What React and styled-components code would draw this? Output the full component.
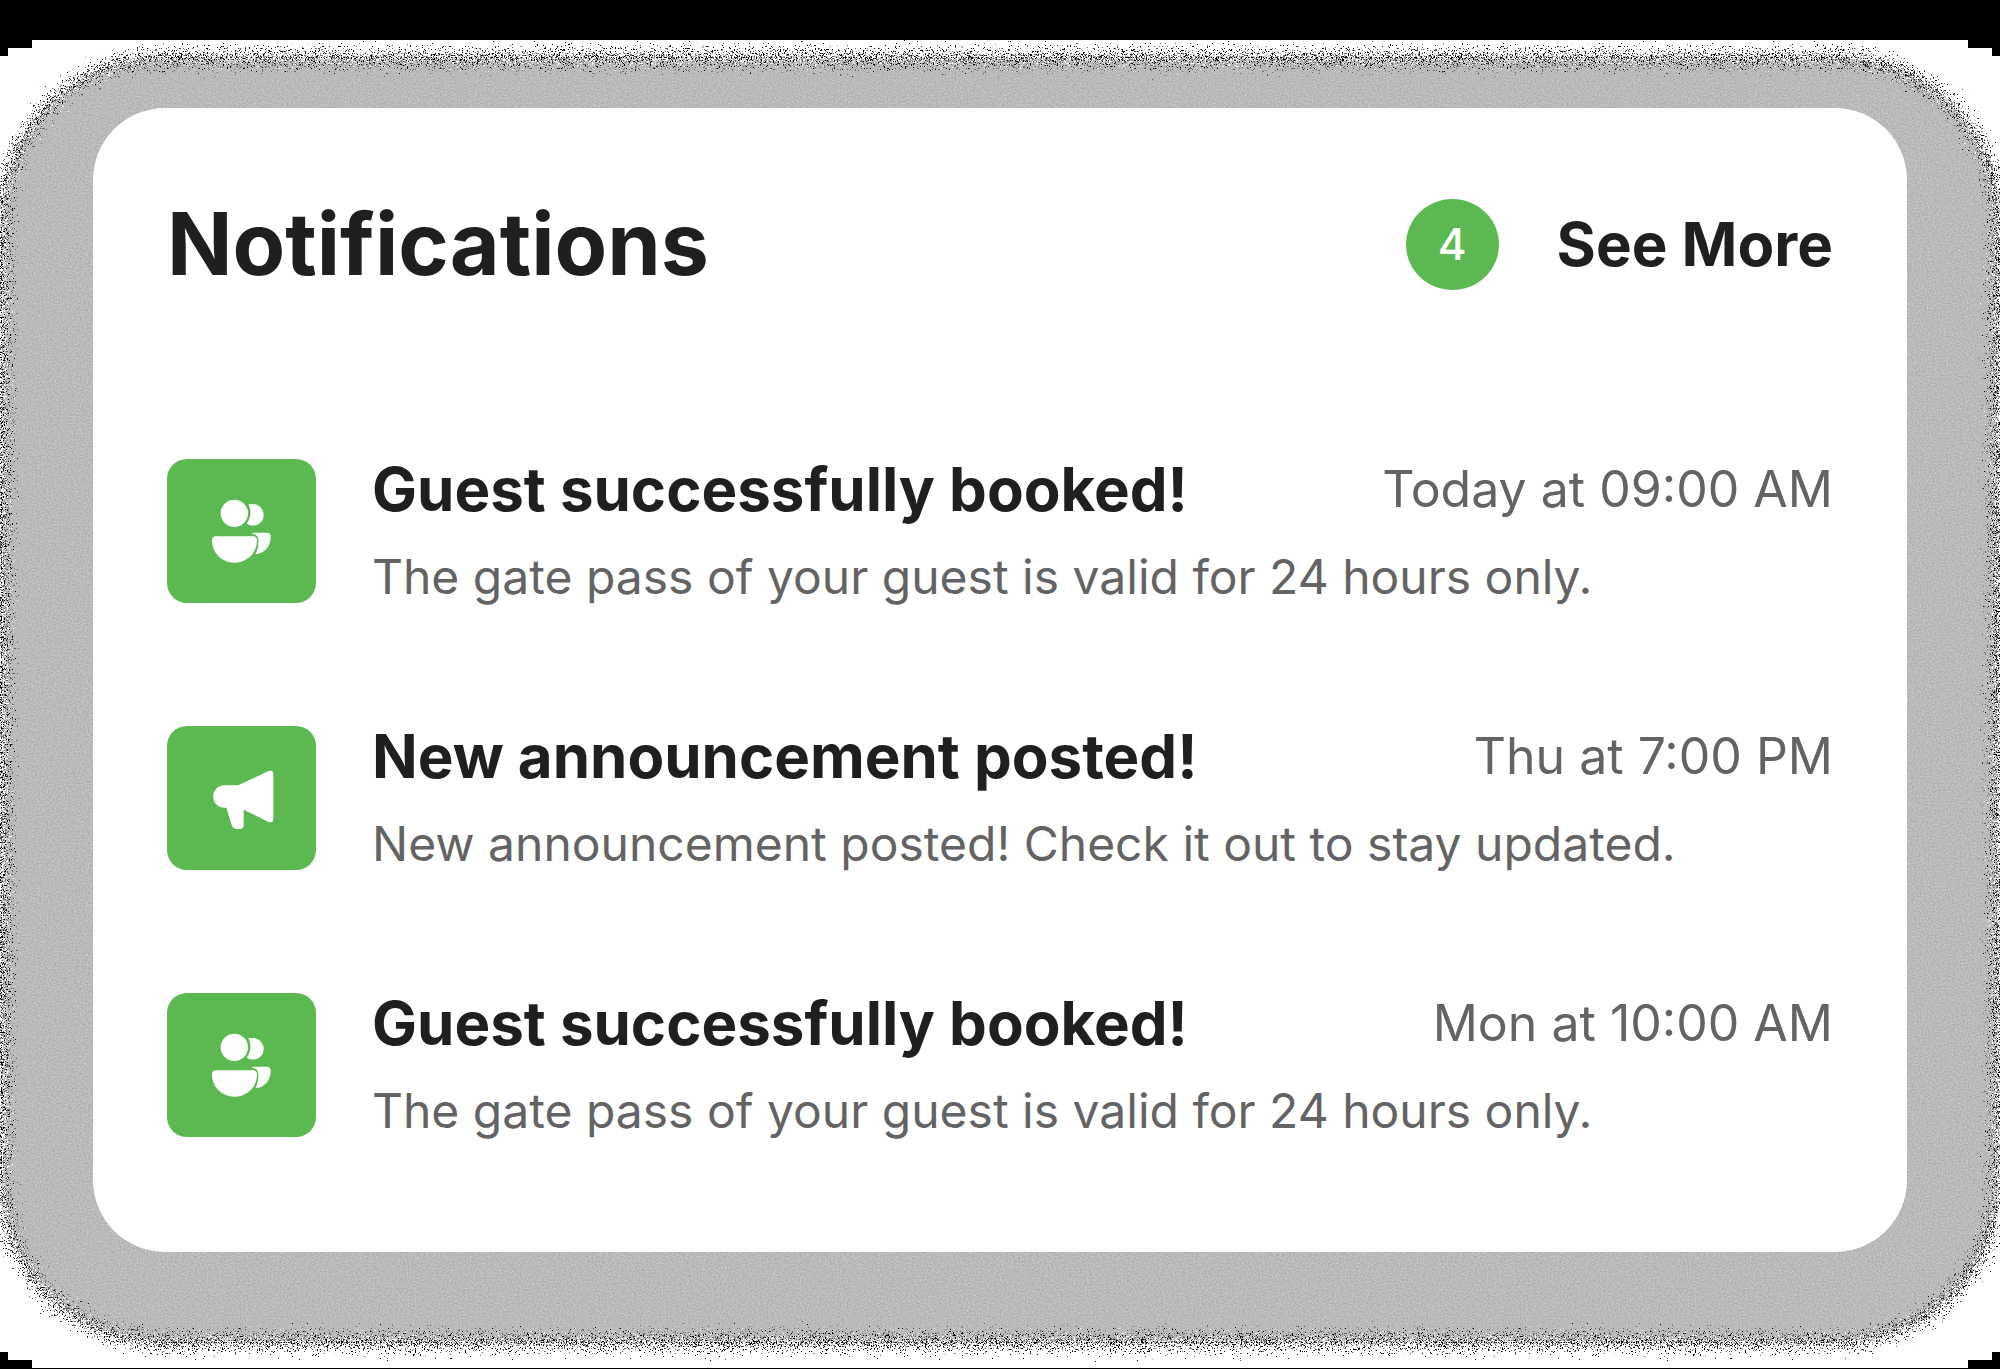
import React from "react";
import styled, { createGlobalStyle } from "styled-components";

const color = {
  green: "#5cb951",
  ink: "#1f1f1f",
  muted: "#636363",
  halo: "#bababa",
};

const GlobalStyle = createGlobalStyle`
  *, *::before, *::after { box-sizing: border-box; }
  body {
    margin: 0;
    background: #000;
    color: ${color.ink};
    font-family: Inter, "Liberation Sans", sans-serif;
  }
`;

const FilterDefs = styled.svg`
  position: absolute;
  width: 0;
  height: 0;
`;

const Page = styled.main`
  display: flex;
  flex-direction: column;
  min-height: 100vh;
  padding: 40px 0 1px;
`;

/* White backing whose corners step inwards by 8px blocks. */
const Backing = styled.div`
  flex: 1;
  display: flex;
  flex-direction: column;
  padding: 18px 0 26px;
  overflow: hidden;
  background: #fff;
  clip-path: polygon(
    32px 0, calc(100% - 32px) 0, calc(100% - 32px) 8px, calc(100% - 8px) 8px,
    calc(100% - 8px) 16px, 100% 16px, 100% calc(100% - 16px),
    calc(100% - 8px) calc(100% - 16px), calc(100% - 8px) calc(100% - 8px),
    calc(100% - 32px) calc(100% - 8px), calc(100% - 32px) 100%, 32px 100%,
    32px calc(100% - 8px), 8px calc(100% - 8px), 8px calc(100% - 16px),
    0 calc(100% - 16px), 0 16px, 8px 16px, 8px 8px, 32px 8px
  );
`;

const Halo = styled.div`
  position: relative;
  flex: 1;
  padding: 50px 93px 90px;

  &::before {
    content: "";
    position: absolute;
    inset: 0 2px;
    border-radius: 160px;
    background: ${color.halo};
    border: 3px solid #666;
    box-shadow: 0 0 0 2px #000;
    filter: url(#scatter);
  }
`;

const Card = styled.section`
  position: relative;
  padding: 88px 74px 99px;
  border-radius: 72px;
  background: #fff;
`;

const Header = styled.header`
  display: flex;
  align-items: center;
  gap: 58px;
  height: 96px;
  margin-bottom: 151px;
`;

const Heading = styled.h1`
  flex: 1;
  margin: 0;
  font-size: 86px;
  line-height: 96px;
  font-weight: 700;
`;

const Count = styled.span`
  display: grid;
  place-items: center;
  width: 93px;
  height: 91px;
  border-radius: 50%;
  background: ${color.green};
  color: #fff;
  font-size: 44px;
  font-weight: 500;
`;

const SeeMore = styled.a`
  color: inherit;
  font-size: 60px;
  line-height: 92px;
  font-weight: 700;
  text-decoration: none;
`;

const List = styled.ul`
  display: flex;
  flex-direction: column;
  gap: 91px;
  margin: 0;
  padding: 0;
  list-style: none;
`;

const Item = styled.li`
  display: flex;
  align-items: center;
  gap: 56px;
`;

const Tile = styled.span`
  flex: none;
  width: 149px;
  height: 144px;
  border-radius: 20px;
  background: ${color.green};

  svg {
    display: block;
    width: 100%;
    height: 100%;
    fill: #fff;
  }
`;

const Body = styled.div`
  flex: 1;
  min-width: 0;
`;

const TitleLine = styled.div`
  display: flex;
  align-items: center;
  justify-content: space-between;
  gap: 24px;
`;

const Title = styled.h2`
  margin: 0;
  font-size: 60px;
  line-height: 92px;
  font-weight: 700;
  white-space: nowrap;
`;

const Time = styled.time`
  color: ${color.muted};
  font-size: 50px;
  line-height: 84px;
  white-space: nowrap;
`;

const Message = styled.p`
  margin: 0;
  color: ${color.muted};
  font-size: 48px;
  line-height: 84px;
  white-space: nowrap;
`;

function GuestsIcon() {
  return (
    <svg viewBox="0 0 447 432" aria-hidden="true">
      <circle cx="202" cy="163" r="41" />
      <path d="M244 136 C260 132 276 137 284 149 C294 163 291 182 279 192 C268 201 251 202 239 194 C252 177 254 154 244 136 Z" />
      <path d="M147 232 H258 Q270 232 270 244 C270 284 238 311 202 311 C166 311 135 284 135 244 Q135 232 147 232 Z" />
      <path d="M254 225 Q256 221 262 221 H300 Q311 221 311 233 C311 262 292 284 265 286 C272 274 275 258 274 244 Q274 226 254 225 Z" />
    </svg>
  );
}

function MegaphoneIcon() {
  return (
    <svg viewBox="0 0 447 432" aria-hidden="true">
      <path d="M172 178 H210 Q215 178 220 175 L303 136 Q319 131 319 144 V278 Q319 292 304 288 L230 251 V296 Q230 309 218 309 H211 Q198 309 194 297 L178 245 H172 A33 33 0 0 1 172 178 Z" />
    </svg>
  );
}

const notifications = [
  {
    id: 1,
    Icon: GuestsIcon,
    title: "Guest successfully booked!",
    time: "Today at 09:00 AM",
    message: "The gate pass of your guest is valid for 24 hours only.",
  },
  {
    id: 2,
    Icon: MegaphoneIcon,
    title: "New announcement posted!",
    time: "Thu at 7:00 PM",
    message: "New announcement posted! Check it out to stay updated.",
  },
  {
    id: 3,
    Icon: GuestsIcon,
    title: "Guest successfully booked!",
    time: "Mon at 10:00 AM",
    message: "The gate pass of your guest is valid for 24 hours only.",
  },
];

export default function App() {
  return (
    <>
      <GlobalStyle />
      <FilterDefs aria-hidden="true">
        <filter id="scatter" x="-2%" y="-3%" width="104%" height="106%" colorInterpolationFilters="sRGB">
          <feTurbulence type="fractalNoise" baseFrequency="0.6" numOctaves="2" seed="4" result="noise" />
          <feDisplacementMap in="SourceGraphic" in2="noise" scale="52" xChannelSelector="R" yChannelSelector="G" result="edge" />
          <feColorMatrix in="noise" type="matrix" values="0 0 1 0 0  0 0 1 0 0  0 0 1 0 0  0 0 0 0 1" result="grain" />
          <feComposite in="edge" in2="grain" operator="arithmetic" k1="0" k2="1" k3="0.2" k4="-0.1" result="grainy" />
          <feComposite in="grainy" in2="edge" operator="in" />
        </filter>
      </FilterDefs>
      <Page>
        <Backing>
          <Halo>
            <Card aria-labelledby="notifications-heading">
              <Header>
                <Heading id="notifications-heading">Notifications</Heading>
                <Count>4</Count>
                <SeeMore href="#all">See More</SeeMore>
              </Header>
              <List>
                {notifications.map(({ id, Icon, title, time, message }) => (
                  <Item key={id}>
                    <Tile>
                      <Icon />
                    </Tile>
                    <Body>
                      <TitleLine>
                        <Title>{title}</Title>
                        <Time>{time}</Time>
                      </TitleLine>
                      <Message>{message}</Message>
                    </Body>
                  </Item>
                ))}
              </List>
            </Card>
          </Halo>
        </Backing>
      </Page>
    </>
  );
}
